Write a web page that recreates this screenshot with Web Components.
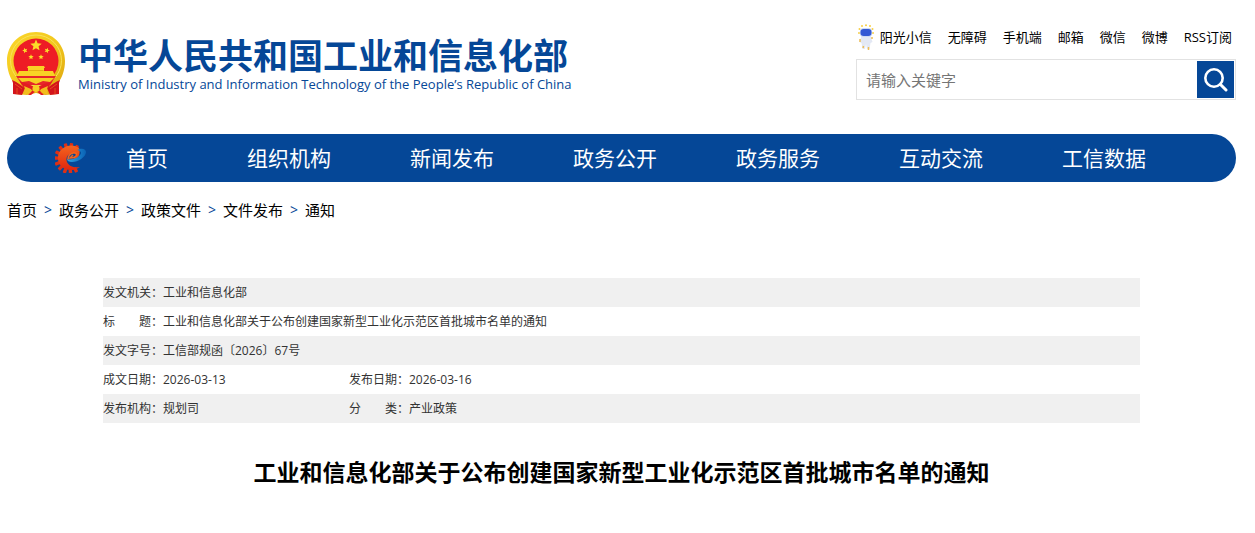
<!DOCTYPE html>
<html lang="zh-CN">
<head>
<meta charset="utf-8">
<meta name="viewport" content="width=device-width, initial-scale=1">
<title>工业和信息化部关于公布创建国家新型工业化示范区首批城市名单的通知</title>
<style>
body{margin:0;background:#fff;color:#000;font-family:"Open Sans","Noto Sans CJK SC",sans-serif;--brand:#054797}
</style>
</head>
<body>
<gov-page>
  <site-logo slot="logo"></site-logo>
  <quick-links slot="tools"></quick-links>
  <site-search slot="tools"></site-search>
  <site-nav slot="nav"></site-nav>
  <bread-crumb slot="nav"></bread-crumb>
  <doc-meta></doc-meta>
  <doc-title>工业和信息化部关于公布创建国家新型工业化示范区首批城市名单的通知</doc-title>
</gov-page>
<script>
const define = (name, html) => {
  const t = document.createElement('template');
  t.innerHTML = html;
  customElements.define(name, class extends HTMLElement {
    constructor() {
      super();
      this.attachShadow({ mode: 'open' }).append(t.content.cloneNode(true));
    }
  });
};
const links = items => items.map(s => `<a href="#">${s}</a>`).join('');

define('gov-page', `
<style>
:host{display:block;padding:24px 19px 40px 7px}
header{display:flex;justify-content:space-between;align-items:flex-start;gap:24px;min-height:110px}
.tools{width:380px;display:flex;flex-direction:column;gap:8px}
main{display:block;padding:0 96px;margin-top:57px}
</style>
<header><slot name="logo"></slot><div class="tools"><slot name="tools"></slot></div></header>
<slot name="nav"></slot>
<main><slot></slot></main>`);

let teeth = '';
for (let i = 0; i < 11; i++) teeth += `<rect x="12.8" y="0" width="3.4" height="5" rx=".8" transform="rotate(${-i * 24 + 32} 14.5 15.5)"/>`;
const star = (x, y, r, a = 0) => {
  let p = [];
  for (let i = 0; i < 10; i++) {
    const q = i % 2 ? r * .45 : r, t = (a - 90 + i * 36) * Math.PI / 180;
    p.push((x + q * Math.cos(t)).toFixed(2) + ',' + (y + q * Math.sin(t)).toFixed(2));
  }
  return `<polygon points="${p.join(' ')}"/>`;
};

define('site-logo', `
<style>
:host{display:block;padding-top:8px}
a{display:flex;gap:13px;color:var(--brand);text-decoration:none;white-space:nowrap}
svg{width:58px;height:64px;flex:none}
.cn,.en{display:block}
.cn{font:bold 35px/44px "Noto Sans CJK SC",sans-serif}
.en{font-size:13px;line-height:16px}
</style>
<a href="#">
<svg viewBox="0 0 58 64" aria-hidden="true">
<defs><linearGradient id="g" x1="0" y1="0" x2="1" y2="1"><stop offset="0" stop-color="#fbd72c"/><stop offset=".5" stop-color="#f2c81e"/><stop offset="1" stop-color="#dca30e"/></linearGradient></defs>
<path d="M29 0C12.500 0 0 12.500 0 29c0 9 3 17 7 22l1 11 12 1 9-2 9 2 12-1 1-11c4-5 7-13 7-22C58 12.500 45.500 0 29 0Z" fill="url(#g)"/>
<circle cx="29" cy="28.500" r="25.500" fill="none" stroke="#f9e25a" stroke-width="1"/>
<circle cx="29" cy="29" r="22.500" fill="#ee1c25"/>
<g fill="#fbdc29">${star(29, 13.5, 6)}${star(18, 18.5, 2.8, -20)}${star(40, 18.5, 2.8, 20)}${star(24, 25, 2.8)}${star(34, 25, 2.8)}</g>
<path d="M21 34h16l1 2h-1v3h9l2 5H10l2-5h9v-3h-1Z" fill="#f9d225"/>
<path d="M21.500 38.500h15" stroke="#e0a313" stroke-width=".8"/>
<path d="M9 44h40l-6 9H15Z" fill="#e6262a"/>
<path d="M11 46h36l-4 4-7-1-7 3-7-3-7 1Z" fill="#f7ce22"/>
<path d="M5 48c5 2 10 6 13 8l-3 7-9-1V51ZM53 48c-5 2-10 6-13 8l3 7 9-1V51Z" fill="#d3151c"/>
<path d="M13 50q8 1 16 6 8-5 16-6l-4 6-9 2 5 5h-3l-5-4-5 4h-3l5-5-9-2Z" fill="#e21c22"/>
<path d="M8 52l7 5M50 52l-7 5M10 56v6M48 56v6" stroke="#ee5b20" stroke-width=".8"/>
<circle cx="29" cy="56.500" r="3.500" fill="#f7ce22"/>
<path d="M17 54l7 3v3l-4 2h-3l1-5ZM41 54l-7 3v3l4 2h3l-1-5Z" fill="#f3bd1d"/>
</svg>
<span><span class="cn">中华人民共和国工业和信息化部</span><span class="en">Ministry of Industry and Information Technology of the People’s Republic of China</span></span>
</a>`);

define('quick-links', `
<style>
:host{display:block}
nav{display:flex;justify-content:flex-end;align-items:center;gap:16px;padding-right:4px;height:27px}
a{color:#000;text-decoration:none;font-size:13px;line-height:20px;padding-bottom:2px;white-space:nowrap}
a:first-child{display:flex;align-items:center;gap:6px}
svg{width:16px;height:26px}
</style>
<nav aria-label="快捷链接"><a href="#"><svg viewBox="0 0 16 26" aria-hidden="true">
<g fill="#f8cf45"><circle cx="1" cy="9" r="1"/><circle cx="1.500" cy="5" r="1"/><circle cx="4" cy="2" r="1"/><circle cx="8" cy="1.200" r="1"/><circle cx="12" cy="2" r="1"/><circle cx="14.500" cy="5" r="1"/><circle cx="15" cy="9" r="1"/></g>
<path d="M3.500 12h9l2 6-2 1-1 6H9l-1-5-1 5H4.500l-1-6-2-1Z" fill="#e3e8f4"/>
<rect x="1.800" y="4" width="12.400" height="9" rx="4" fill="#cdd9f3"/><rect x="2.500" y="5" width="11" height="7" rx="3.200" fill="#3358d4"/>
<path d="M2 15v3M14 13v2M5.500 22l-.5 2M10.500 23v3" stroke="#edbd55" stroke-width="1.500"/>
</svg>阳光小信</a>${links(['无障碍', '手机端', '邮箱', '微信', '微博', 'RSS订阅'])}</nav>`);

define('site-search', `
<style>
:host{display:block}
form{display:flex;border:1px solid #e2e2e2;padding:1px;margin:0}
input{flex:1;min-width:0;border:0;outline:0;background:none;padding:0 8px;font:15px/24px "Open Sans","Noto Sans CJK SC",sans-serif;color:#333}
input::placeholder{color:#757575;opacity:1}
button{width:37px;height:37px;border:0;padding:0;background:var(--brand);display:grid;place-items:center}
svg{width:25px;height:25px}
</style>
<form role="search" onsubmit="return false"><input type="text" placeholder="请输入关键字" aria-label="请输入关键字"><button type="submit" aria-label="搜索"><svg viewBox="0 0 25 25" fill="none" stroke="#fff" stroke-width="2.600" stroke-linecap="round" aria-hidden="true"><circle cx="11" cy="11" r="8.700"/><path d="M17.500 17.500 23 23" stroke-width="3"/></svg></button></form>`);

define('site-nav', `
<style>
:host{display:block}
nav{display:flex;align-items:center;height:48px;border-radius:24px;background:var(--brand);padding:0 48px}
svg{width:31px;height:30px;flex:none;margin-right:40px}
div{display:flex;gap:79px}
a{color:#fff;text-decoration:none;font-size:21px;line-height:30px;white-space:nowrap}
</style>
<nav aria-label="主导航"><svg viewBox="0 0 31 30" aria-hidden="true">
<defs><linearGradient id="o" x1="0" y1="0" x2="0" y2="1"><stop offset="0" stop-color="#f4641e"/><stop offset="1" stop-color="#e0260f"/></linearGradient><linearGradient id="b"><stop offset="0" stop-color="#2ea4e4"/><stop offset="1" stop-color="#0a62b4"/></linearGradient></defs>
<g fill="#dc3016">${teeth}</g>
<path d="M24 5C20 1.500 12 1.500 7 6S1.500 18 6 23s13 5.500 19 1c-6 1-11-.5-13-5-1.500-4 .5-7.500 4-8.500 3.500-.8 6 1 5 3-1 2.500-5 3.500-7 3 1 2 6 1.500 8.500-1.500 2.500-3 2.500-7.500 1.500-10Z" fill="url(#o)"/>
<path d="M22 7c5-2.500 9-1 9 2 0 5-8 10-14 10-3 0-5-1-5-3 3 1.500 9 0 12-3 3-2.500 3-5-2-6Z" fill="url(#b)"/>
<path d="M18 12c-1 1-2 2-3 3 3 0 6-1 6.500-3 .5-2-1.500-2.500-3.500-2-3.500 1-5 4-5 6.500" fill="none" stroke="#f4641e" stroke-width="1.500"/>
</svg><div>${links(['首页', '组织机构', '新闻发布', '政务公开', '政务服务', '互动交流', '工信数据'])}</div></nav>`);

define('bread-crumb', `
<style>
:host{display:block;margin-top:17px}
nav{display:flex;font-size:15px;line-height:22px;white-space:nowrap}
a{color:#000;text-decoration:none}
i{width:22px;text-align:center;font-style:normal;color:var(--brand);font-size:14px}
</style>
<nav aria-label="面包屑">${['首页', '政务公开', '政策文件', '文件发布', '通知'].map(s => `<a href="#">${s}</a>`).join('<i>&gt;</i>')}</nav>`);

define('doc-meta', `
<style>
:host{display:block}
table{width:100%;table-layout:fixed;border-collapse:collapse;font-size:12px;line-height:18px;color:#333;text-align:left}
tr{height:29px}
tr:nth-child(odd){background:#f0f0f0}
th,td{padding:0;font-weight:normal;white-space:nowrap}
.l{width:60px}.v{width:186px}
</style>
<table><colgroup><col class="l"><col class="v"><col class="l"><col></colgroup><tbody>
<tr><th scope="row">发文机关：</th><td colspan="3">工业和信息化部</td></tr>
<tr><th scope="row">标　　题：</th><td colspan="3">工业和信息化部关于公布创建国家新型工业化示范区首批城市名单的通知</td></tr>
<tr><th scope="row">发文字号：</th><td colspan="3">工信部规函〔2026〕67号</td></tr>
<tr><th scope="row">成文日期：</th><td>2026-03-13</td><th scope="row">发布日期：</th><td>2026-03-16</td></tr>
<tr><th scope="row">发布机构：</th><td>规划司</td><th scope="row">分　　类：</th><td>产业政策</td></tr>
</tbody></table>`);

define('doc-title', `
<style>
:host{display:block;margin-top:32px}
h1{margin:0;font-size:23px;line-height:34px;font-weight:bold;text-align:center}
</style>
<h1><slot></slot></h1>`);
</script>
</body>
</html>
